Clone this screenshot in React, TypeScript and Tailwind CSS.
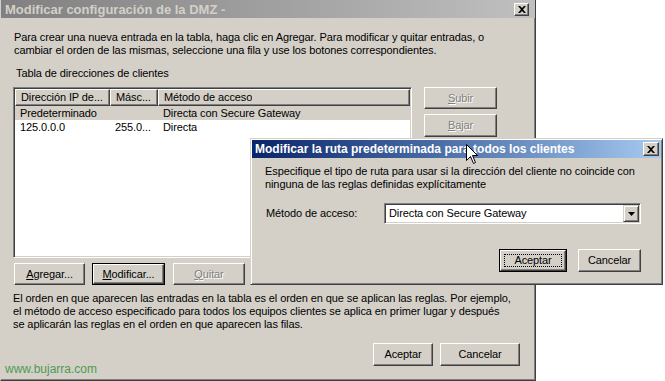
import React from 'react';

type BtnProps = {
  children: React.ReactNode;
  className?: string;
  def?: boolean;
  focus?: boolean;
  disabled?: boolean;
};

// classic 3D push button
const Btn = ({ children, className = '', def = false, focus = false, disabled = false }: BtnProps) => {
  return (
    <div className={`flex ${def ? 'border border-black' : ''} ${className}`}>
      <div className="relative flex flex-1 items-center justify-center border border-b-[#404040] border-l-white border-r-[#404040] border-t-white bg-[#d4d0c8] shadow-[inset_-1px_-1px_0_#808080]">
        {focus && <div className="absolute inset-[3px] border border-dotted border-black" />}
        <span className={disabled ? 'text-[#808080] [text-shadow:1px_1px_0_#fff]' : 'text-black'}>{children}</span>
      </div>
    </div>
  );
};

const CloseBtn = ({ className = '' }: { className?: string }) => (
  <div
    className={`flex items-center justify-center border border-b-[#404040] border-l-white border-r-[#404040] border-t-white bg-[#d4d0c8] shadow-[inset_-1px_-1px_0_#808080] ${className}`}
  >
    <svg width="8" height="7" viewBox="0 0 8 7">
      <path d="M0 0h2l2 2 2-2h2L5 3.5 8 7H6L4 5 2 7H0l3-3.5z" fill="#000" />
    </svg>
  </div>
);

const HeaderCell = ({ label, className = '' }: { label: string; className?: string }) => (
  <div
    className={`flex h-[17px] items-center border border-b-[#404040] border-l-white border-r-[#404040] border-t-white pl-[5px] shadow-[inset_-1px_-1px_0_#808080] ${className}`}
  >
    <span className="truncate">{label}</span>
  </div>
);

const rows = [
  { ip: 'Predeterminado', mask: '', method: 'Directa con Secure Gateway', selected: true },
  { ip: '125.0.0.0', mask: '255.0...', method: 'Directa', selected: false }
];

const u = (c: string) => <span className="underline">{c}</span>;

const App = () => {
  return (
    <div className="relative h-[381px] w-[665px] overflow-hidden whitespace-nowrap bg-white font-['Liberation_Sans',Arial,sans-serif] text-[11px] leading-[13px] tracking-[-0.1px] text-black">
      {/* main window */}
      <div className="flex h-[381px] w-[536px] flex-col border-b border-l border-r border-b-[#404040] border-l-[#d4d0c8] border-r-[#404040] bg-[#d4d0c8] shadow-[inset_-1px_-1px_0_#808080]">
        <div className="flex h-[18px] items-center justify-between bg-linear-to-r from-[#808080] to-[#c0c0c0] pl-[4px] pr-[6px]">
          <span className="text-[13px] font-bold tracking-normal text-[#d4d0c8]">Modificar configuración de la DMZ -</span>
          <CloseBtn className="h-[13px] w-[15px]" />
        </div>

        <div className="flex flex-1 flex-col px-[12px] pt-[13px]">
          <p className="pl-[1px]">
            Para crear una nueva entrada en la tabla, haga clic en Agregar. Para modificar y quitar entradas, o
            <br />
            cambiar el orden de las mismas, seleccione una fila y use los botones correspondientes.
          </p>

          <div className="mt-[10px] pl-[3px]">Tabla de direcciones de clientes</div>

          <div className="mt-[7px] flex">
            <div className="flex h-[171px] w-[399px] flex-col border border-b-white border-l-[#808080] border-r-white border-t-[#808080] bg-white p-[1px] shadow-[inset_1px_1px_0_#404040,inset_-1px_-1px_0_#d4d0c8]">
              <div className="flex bg-[#d4d0c8]">
                <HeaderCell label="Dirección IP de..." className="w-[95px]" />
                <HeaderCell label="Másc..." className="w-[48px]" />
                <HeaderCell label="Método de acceso" className="flex-1" />
              </div>
              {rows.map((r, i) => (
                <div key={i} className={`flex h-[14px] items-center ${r.selected ? 'bg-[#d4d0c8]' : ''}`}>
                  <span className="w-[95px] pl-[5px]">{r.ip}</span>
                  <span className="w-[48px] pl-[5px]">{r.mask}</span>
                  <span className="flex-1 pl-[5px]">{r.method}</span>
                </div>
              ))}
            </div>

            <div className="ml-[12px] flex flex-col gap-[5px]">
              <Btn className="h-[22px] w-[73px]" disabled>
                {u('S')}ubir
              </Btn>
              <Btn className="h-[23px] w-[73px]" disabled>
                {u('B')}ajar
              </Btn>
            </div>
          </div>

          <div className="mt-[5px] flex h-[22px]">
            <Btn className="ml-[1px] w-[71px]">{u('A')}gregar...</Btn>
            <Btn className="ml-[7px] w-[73px]" def>
              {u('M')}odificar...
            </Btn>
            <Btn className="ml-[8px] w-[72px]" disabled>
              {u('Q')}uitar
            </Btn>
          </div>

          <p className="mt-[7px]">
            El orden en que aparecen las entradas en la tabla es el orden en que se aplican las reglas. Por ejemplo,
            <br />
            el método de acceso especificado para todos los equipos clientes se aplica en primer lugar y después
            <br />
            se aplicarán las reglas en el orden en que aparecen las filas.
          </p>

          <div className="mr-[3px] mt-[12px] flex justify-end gap-[7px]">
            <Btn className="h-[23px] w-[60px]">Aceptar</Btn>
            <Btn className="h-[23px] w-[80px]">Cancelar</Btn>
          </div>
        </div>
      </div>

      {/* modal dialog over the main window */}
      <div className="absolute left-[250px] top-[138px] flex h-[147px] w-[413px] flex-col border border-b-[#404040] border-l-[#d4d0c8] border-r-[#404040] border-t-[#d4d0c8] bg-[#d4d0c8] p-[1px] shadow-[inset_1px_1px_0_#fff,inset_-1px_-1px_0_#808080]">
        <div className="flex h-[18px] items-center justify-between bg-linear-to-r from-[#0a246a] to-[#a6caf0] pl-[3px] pr-[2px]">
          <span className="text-[12px] font-bold tracking-normal text-white">
            Modificar la ruta predeterminada para todos los clientes
          </span>
          <CloseBtn className="h-[14px] w-[16px]" />
        </div>
        <div className="flex flex-1 flex-col pl-[13px] pr-[20px] pt-[7px]">
          <p>
            Especifique el tipo de ruta para usar si la dirección del cliente no coincide con
            <br />
            ninguna de las reglas definidas explícitamente
          </p>
          <div className="mt-[12px] flex items-center">
            <span className="w-[119px] pl-[1px]">Método de acceso:</span>
            <div className="flex h-[21px] flex-1 border border-b-white border-l-[#808080] border-r-white border-t-[#808080] bg-white p-[1px] shadow-[inset_1px_1px_0_#404040,inset_-1px_-1px_0_#d4d0c8]">
              <span className="flex flex-1 items-center pl-[3px]">Directa con Secure Gateway</span>
              <div className="flex w-[16px] items-center justify-center border border-b-[#404040] border-l-[#d4d0c8] border-r-[#404040] border-t-[#d4d0c8] bg-[#d4d0c8] shadow-[inset_1px_1px_0_#fff,inset_-1px_-1px_0_#808080]">
                <svg width="7" height="4" viewBox="0 0 7 4">
                  <path d="M0 0h7L3.5 4z" fill="#000" />
                </svg>
              </div>
            </div>
          </div>
          <div className="mt-[25px] flex justify-end gap-[11px]">
            <Btn className="h-[23px] w-[68px]" def focus>
              Aceptar
            </Btn>
            <Btn className="h-[23px] w-[63px]">Cancelar</Btn>
          </div>
        </div>
      </div>

      {/* mouse pointer */}
      <svg className="absolute left-[466px] top-[144px]" width="13" height="20" viewBox="0 0 13 20">
        <path d="M0.5 0.5V16.5L4.5 12.5L7.5 19.5L9.5 18.5L6.5 11.5H11.5Z" fill="#fff" stroke="#000" strokeWidth="1" />
      </svg>

      {/* watermark */}
      <div className="absolute left-[5px] top-[362px] text-[12px] leading-[14px] tracking-normal text-[#4f9a52]">
        www.bujarra.com
      </div>
    </div>
  );
};

export default App;
